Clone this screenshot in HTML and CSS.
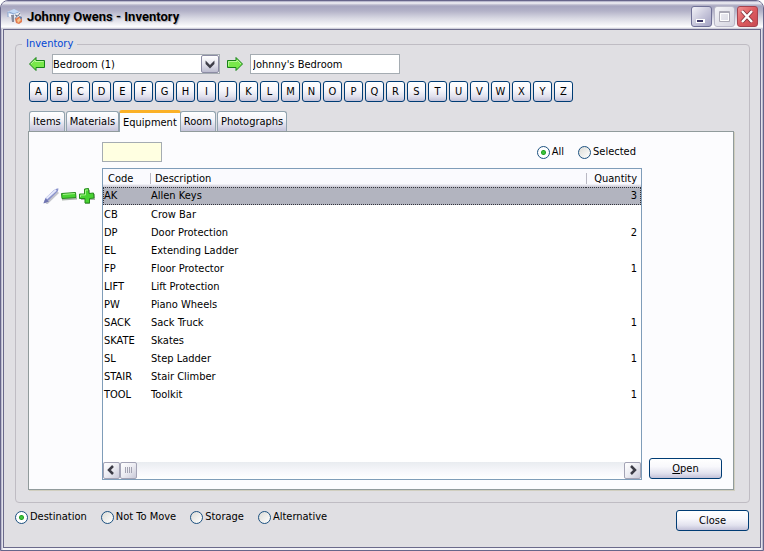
FILE: index.html
```html
<!DOCTYPE html>
<html lang="en">
<head>
<meta charset="utf-8">
<title>Johnny Owens - Inventory</title>
<link rel="stylesheet" href="styles.css">
</head>
<body>
<div class="window">
  <header class="titlebar">
    <svg class="app-icon" viewBox="0 0 16 16" aria-hidden="true">
      <path d="M0 3l7-3 6 3-6 3z" fill="#c3d9f5"/>
      <path d="M1 4l6 2v4l-6-3z" fill="#f4f8ff"/>
      <path d="M1 3v5M2 3l5 2 5-2" stroke="#86a5d0" fill="none"/>
      <path d="M4 6h3v7H5z" fill="#868b9c"/>
      <path d="M7 5l6-2 1 5-3 3-4-1z" fill="#e6e8ee"/>
      <path d="M8 6l3 1 2-3M8 10l2-3" stroke="#6e7c94" fill="none"/>
      <path d="M8 10l5-3 2 2v4l-3 2-3-1z" fill="#e27b50"/>
      <path d="M10 11l4-3v3l-3 3z" fill="#f7c78f"/>
      <path d="M12 7l3 1-1 3z" fill="#5c81b7"/>
    </svg>
    <h1 class="title">Johnny Owens - Inventory</h1>
    <div class="caption-buttons">
      <button class="caption" type="button" aria-label="Minimize">
        <svg viewBox="0 0 19 19"><path d="M4 12h9v4H4z" fill="#fff"/><path d="M5 13h6v2H5z" fill="#3d3866"/></svg>
      </button>
      <button class="caption caption-off" type="button" aria-label="Maximize" disabled>
        <svg viewBox="0 0 19 19"><path d="M4.500 4.500h10v10h-10z" fill="none" stroke="#aaa9b5"/><path d="M5 5.500h9" stroke="#aaa9b5"/><path d="M5.500 6.500h8v7h-8z" fill="none" stroke="#fff"/></svg>
      </button>
      <button class="caption caption-close" type="button" aria-label="Close window">
        <svg viewBox="0 0 19 19"><path d="M4 4l10 11M14 4L4 15" stroke="#7d3038" stroke-width="4"/><path d="M4 4l10 11M14 4L4 15" stroke="#fff" stroke-width="2.500"/></svg>
      </button>
    </div>
  </header>
  <main class="client">
    <fieldset class="group">
      <legend>Inventory</legend>
      <div class="room-row">
        <button class="icon-button" type="button" aria-label="Previous room">
          <svg viewBox="0 0 16 16"><path d="M.500 8L7 1.500v3h8.500v7H7v3z" fill="#79e84a" stroke="#178018"/><path d="M2 8l4-4v1.500h8.500" fill="none" stroke="#b6f796"/></svg>
        </button>
        <div class="combo">
          <select aria-label="Room"><option>Bedroom (1)</option></select>
          <svg class="combo-arrow" viewBox="0 0 18 18" aria-hidden="true"><path d="M4 5l5 5 5-5v4l-5 5-5-5z" fill="#3e3e48"/></svg>
        </div>
        <button class="icon-button" type="button" aria-label="Next room">
          <svg viewBox="0 0 16 16"><path d="M15.500 8L9 1.500v3H.500v7H9v3z" fill="#79e84a" stroke="#178018"/><path d="M14 8l-4-4v1.500H1.500V10" fill="none" stroke="#b6f796"/></svg>
        </button>
        <input class="text room-name" type="text" value="Johnny's Bedroom" aria-label="Room name">
      </div>
      <div class="letters">
        <button type="button">A</button><button type="button">B</button><button type="button">C</button><button type="button">D</button><button type="button">E</button><button type="button">F</button><button type="button">G</button><button type="button">H</button><button type="button">I</button><button type="button">J</button><button type="button">K</button><button type="button">L</button><button type="button">M</button><button type="button">N</button><button type="button">O</button><button type="button">P</button><button type="button">Q</button><button type="button">R</button><button type="button">S</button><button type="button">T</button><button type="button">U</button><button type="button">V</button><button type="button">W</button><button type="button">X</button><button type="button">Y</button><button type="button">Z</button>
      </div>
      <div class="tabs" role="tablist">
        <button class="tab" type="button" role="tab">Items</button>
        <button class="tab" type="button" role="tab">Materials</button>
        <button class="tab tab-active" type="button" role="tab" aria-selected="true">Equipment</button>
        <button class="tab" type="button" role="tab">Room</button>
        <button class="tab" type="button" role="tab">Photographs</button>
      </div>
      <section class="panel">
        <div class="filter">
          <input class="text code-filter" type="text" aria-label="Filter by code">
          <div class="filter-options">
            <label><input type="radio" name="show" checked>All</label>
            <label><input type="radio" name="show">Selected</label>
          </div>
        </div>
        <div class="row-tools">
          <button class="icon-button" type="button" aria-label="Edit">
            <svg viewBox="0 0 16 16"><path d="M3 15.500L15 4" stroke="#c3c4cc" stroke-width="3"/><path d="M.500 15l2-5L11 2l3-1.500h1.500L15 3l-9 9z" fill="#8a92cc"/><path d="M3.500 10.500L13 2" stroke="#e6e9fc" stroke-width="2"/><path d="M.500 15.500l2-5 3.500 3z" fill="#6f74b0"/></svg>
          </button>
          <button class="icon-button" type="button" aria-label="Remove">
            <svg viewBox="0 0 16 16"><path d="M1 11.500l15-1" stroke="#aab3aa" stroke-width="2"/><path d="M.500 5.500l14-1 .500 5-14 1z" fill="#48d332" stroke="#268b1c"/><path d="M2 6.500l12-1" stroke="#a2f086"/></svg>
          </button>
          <button class="icon-button" type="button" aria-label="Add">
            <svg viewBox="0 0 16 16"><path d="M6 2h5v4h5v6h-5v4H6v-4H2V7h4z" fill="#aab3aa"/><path d="M5.500 1l4-.500.500 5 4.500-.500.500 5-4.500.500v4.500h-4.500v-4.500L.500 10.500V6h5z" fill="#48d332" stroke="#268b1c"/><path d="M1.500 9V7h5V2h2.500" fill="none" stroke="#a2f086"/></svg>
          </button>
        </div>
        <div class="list">
          <div class="list-body">
            <table>
              <thead>
                <tr><th class="col-code">Code</th><th>Description</th><th class="col-qty">Quantity</th></tr>
              </thead>
              <tbody>
                <tr class="selected"><td>AK</td><td>Allen Keys</td><td>3</td></tr>
                <tr><td>CB</td><td>Crow Bar</td><td></td></tr>
                <tr><td>DP</td><td>Door Protection</td><td>2</td></tr>
                <tr><td>EL</td><td>Extending Ladder</td><td></td></tr>
                <tr><td>FP</td><td>Floor Protector</td><td>1</td></tr>
                <tr><td>LIFT</td><td>Lift Protection</td><td></td></tr>
                <tr><td>PW</td><td>Piano Wheels</td><td></td></tr>
                <tr><td>SACK</td><td>Sack Truck</td><td>1</td></tr>
                <tr><td>SKATE</td><td>Skates</td><td></td></tr>
                <tr><td>SL</td><td>Step Ladder</td><td>1</td></tr>
                <tr><td>STAIR</td><td>Stair Climber</td><td></td></tr>
                <tr><td>TOOL</td><td>Toolkit</td><td>1</td></tr>
              </tbody>
            </table>
          </div>
          <div class="scrollbar">
            <button class="scroll-part" type="button" aria-label="Scroll left"><svg viewBox="0 0 15 15"><path d="M9 3L5 7l4 4" fill="none" stroke="#3c3c46" stroke-width="2.500"/></svg></button>
            <div class="scroll-part"><svg viewBox="0 0 15 15" aria-hidden="true"><path d="M4.500 4v6M6.500 4v6M8.500 4v6M10.500 4v6" stroke="#a3a3b2"/></svg></div>
            <button class="scroll-part scroll-end" type="button" aria-label="Scroll right"><svg viewBox="0 0 15 15"><path d="M6 3l4 4-4 4" fill="none" stroke="#3c3c46" stroke-width="2.500"/></svg></button>
          </div>
        </div>
        <button class="push open" type="button"><u>O</u>pen</button>
      </section>
    </fieldset>
    <footer class="footer">
      <div class="kinds">
        <label><input type="radio" name="kind" checked>Destination</label>
        <label><input type="radio" name="kind">Not To Move</label>
        <label><input type="radio" name="kind">Storage</label>
        <label><input type="radio" name="kind">Alternative</label>
      </div>
      <button class="push" type="button">Close</button>
    </footer>
  </main>
</div>
</body>
</html>
```
FILE: styles.css
```css
* { box-sizing: border-box; }

body {
  margin: 0;
  background: #fff;
  color: #000;
  font: 11px/14px Tahoma, "DejaVu Sans Condensed", sans-serif;
}

button, input, select { font: inherit; color: inherit; margin: 0; padding: 0; }
svg { display: block; }

.window {
  display: flex;
  flex-direction: column;
  min-height: 100vh;
  padding: 0 2px 2px;
  border: 1px solid #66658a;
  border-radius: 8px 8px 0 0;
  background: linear-gradient(90deg, #a9a8c0, #f4f4f8 2px, #f4f4f8 calc(100% - 2px), #a9a8c0);
}

.titlebar {
  display: flex;
  align-items: center;
  height: 28px;
  margin: 0 -2px;
  padding: 3px 5px 0 6px;
  border-radius: 7px 7px 0 0;
  background: linear-gradient(#a4a3be, #f8f8fb 2px, #d0cfdc 3px, #a6a5bf 5px, #b3b2c8 10px, #d7d7e2 17px, #f5f5f8 24px, #fff 26px, #c0c0cf);
}

.app-icon { width: 16px; height: 16px; margin-right: 4px; }

.title {
  flex: 1;
  margin: 0;
  font: bold 13px/16px "Trebuchet MS", Roboto, sans-serif;
  text-shadow: 1px 1px 1px #a9a9b6;
}

.caption-buttons { display: flex; gap: 2px; }

.caption {
  width: 21px;
  height: 21px;
  border: 1px solid #6f7096;
  border-radius: 3px;
  background: linear-gradient(135deg, #f3f3f8, #c9c8dc 50%, #a3a2c2);
}
.caption-off { border-color: #b9b8c8; background: linear-gradient(135deg, #f4f4f7, #d5d5e0); }
.caption-close { border-color: #a5424e; background: linear-gradient(135deg, #f09090, #dd5b60 50%, #c84a52); }

.client {
  flex: 1;
  padding: 7px 10px 16px 11px;
  border: 1px solid #6b6a8b;
  background: #e0dfe3;
}

.group {
  min-width: 0;
  margin: 0;
  padding: 3px 15px 12px 12px;
  border: 1px solid #bfbcc3;
  border-radius: 4px;
}
.group legend { margin-left: -6px; padding: 0 4px; color: #0046d5; }

.room-row { display: flex; align-items: center; padding-left: 1px; }

.icon-button { width: 16px; height: 16px; border: 0; background: none; }

.combo { position: relative; width: 168px; margin: 0 7px 0 7px; }
.combo select {
  display: block;
  width: 100%;
  height: 20px;
  padding: 1px 20px 0 0;
  appearance: none;
  border: 1px solid #a5acb2;
  border-radius: 0;
  background: #fff;
}
.combo-arrow {
  position: absolute;
  top: 1px;
  right: 1px;
  width: 18px;
  height: 18px;
  border: 1px solid #8c8ca4;
  border-radius: 2px;
  background: linear-gradient(#fff, #e5e5ee 50%, #bcbccf);
  pointer-events: none;
}

.text { height: 20px; padding: 0 2px; border: 1px solid #a5acb2; border-radius: 0; background: #fff; }
.room-name { width: 150px; margin-left: 7px; }

.letters { display: flex; gap: 2px; margin-top: 7px; padding-left: 1px; }

.letters button, .push {
  height: 21px;
  border: 1px solid #003c74;
  border-radius: 3px;
  background: linear-gradient(#fff, #f8f8fc 40%, #e2e2ee 75%, #c2c1d8);
}
.letters button { width: 19px; }
.push { width: 73px; }

.tabs { display: flex; align-items: flex-end; margin-top: 8px; padding-left: 1px; }
.tab {
  height: 20px;
  margin-right: 1px;
  padding: 0 3px;
  border: 1px solid #91a3ae;
  border-bottom: 0;
  border-radius: 3px 3px 0 0;
  background: linear-gradient(#fff, #f4f4f9 40%, #c4c3d9);
}
.tab-active {
  z-index: 1;
  height: 22px;
  margin: 0 -1px -1px;
  border-top: 3px solid #fbb127;
  background: #fcfcfe;
}

.panel {
  display: grid;
  grid-template-columns: 73px minmax(0, 1fr) 91px;
  grid-template-rows: 20px auto;
  row-gap: 6px;
  padding: 10px 0 9px;
  border: 1px solid #919b9c;
  background: #fcfcfe;
  box-shadow: 1px 1px #d0cebf;
}

.filter { grid-column: 2; display: flex; justify-content: space-between; align-items: center; }
.code-filter { width: 60px; background: #ffffe1; }
.filter-options { display: flex; gap: 14px; padding-right: 6px; }

label { display: flex; align-items: center; gap: 2px; }
input[type="radio"] {
  appearance: none;
  width: 13px;
  height: 13px;
  border: 1px solid #1c5180;
  border-radius: 50%;
  background: linear-gradient(135deg, #dcdcd7, #fff);
}
input[type="radio"]:checked {
  background: radial-gradient(circle, #3fc43c 1px, #21a121 2px, #fff 3px);
}

.row-tools { grid-column: 1; grid-row: 2; display: flex; gap: 2px; padding: 20px 0 0 14px; }

.list {
  grid-column: 2;
  display: flex;
  flex-direction: column;
  min-height: 312px;
  border: 1px solid #7f9db9;
  background: #fff;
}
.list-body { flex: 1; }

table { width: 100%; table-layout: fixed; border-collapse: separate; border-spacing: 0; }
th, td { height: 18px; padding: 1px 1px 0; font-weight: normal; text-align: left; white-space: nowrap; }
th { padding-left: 5px; background: linear-gradient(#fafafe 15px, #e5e4ec 16px, #cac9d4); }
th + th { background: linear-gradient(#b9b8c3, #b9b8c3) 0 4px / 1px 11px no-repeat, linear-gradient(#fafafe 15px, #e5e4ec 16px, #cac9d4); }
.col-code { width: 47px; }
.col-qty { width: 55px; }
th:last-child, td:last-child { padding-right: 4px; text-align: right; }
.selected td { padding-top: 0; background: #b2b4bf; border: 0 dotted #33343c; border-width: 1px 0; }
.selected td:first-child { border-left-width: 1px; padding-left: 0; }
.selected td:last-child { border-right-width: 1px; padding-right: 3px; }

.scrollbar { display: flex; height: 17px; background: linear-gradient(#e9ecf0, #f8f8fc 60%, #fff); }
.scroll-part {
  width: 17px;
  height: 17px;
  border: 1px solid #a3a3b5;
  border-radius: 2px;
  background: linear-gradient(135deg, #fff, #ececf2 50%, #c9c9d8);
}
.scroll-end { margin-left: auto; }

.open { grid-column: 3; grid-row: 2; align-self: end; margin: 0 0 1px 7px; }

.footer { display: flex; justify-content: space-between; align-items: flex-start; padding: 7px 1px 0 0; }
.kinds { display: flex; gap: 14px; }
```
